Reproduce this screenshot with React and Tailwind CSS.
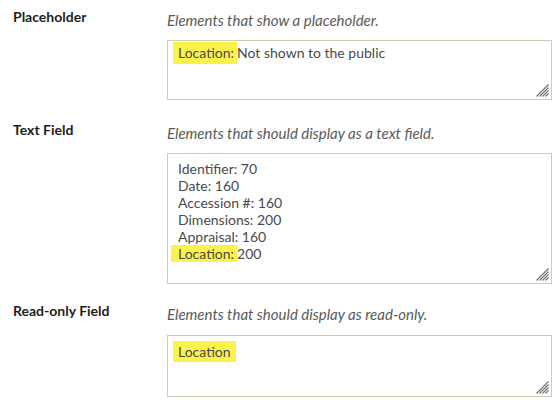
import React from 'react';

const font = { fontFamily: 'Lato, "Open Sans", sans-serif' };

function Grip() {
  return (
    <svg
      className="absolute right-[2px] bottom-[2px]"
      width="13"
      height="13"
      viewBox="0 0 13 13"
    >
      <g stroke="#6e6e6e" strokeWidth="1.1">
        <line x1="12.5" y1="0.5" x2="0.5" y2="12.5" />
        <line x1="12.5" y1="3.5" x2="3.5" y2="12.5" />
        <line x1="12.5" y1="6.5" x2="6.5" y2="12.5" />
        <line x1="12.5" y1="9.5" x2="9.5" y2="12.5" />
      </g>
    </svg>
  );
}

function Mark({ children, className = '' }) {
  return <span className={`bg-[#fbf34c] ${className}`}>{children}</span>;
}

function Section({ label, desc, pt, boxMt, boxH, boxPad, children }) {
  return (
    <div className={`flex ${pt}`}>
      <div className="w-[167px] pl-[13px] shrink-0">
        <div className="text-[14px] leading-[14px] font-bold text-[#1e1e1e]">
          {label}
        </div>
      </div>
      <div className="w-[385px]">
        <div className="text-[15px] leading-5 italic text-[#5a5a5a]">{desc}</div>
        <div
          className={`relative ${boxMt} ${boxH} ${boxPad} border border-[#cdcdb9] bg-white text-[14px] leading-[17px] text-[#4a4a4a]`}
        >
          {children}
          <Grip />
        </div>
      </div>
    </div>
  );
}

export default function App() {
  return (
    <div className="w-[559px] h-[404px] bg-white overflow-hidden" style={font}>
      <Section
        label="Placeholder"
        desc="Elements that show a placeholder."
        pt="pt-[10px]"
        boxMt="mt-[10px]"
        boxH="h-[60px]"
        boxPad="pl-[5px] pt-[1px]"
      >
        <div className="leading-[22px]">
          <Mark className="inline-block pl-[5px] pr-[3px]">Location:</Mark>
          Not shown to the public
        </div>
      </Section>

      <Section
        label="Text Field"
        desc="Elements that should display as a text field."
        pt="pt-[23px]"
        boxMt="mt-[10px]"
        boxH="h-[131px]"
        boxPad="pl-[10px] pt-[6px]"
      >
        <div>Identifier: 70</div>
        <div>Date: 160</div>
        <div>Accession #: 160</div>
        <div>Dimensions: 200</div>
        <div>Appraisal: 160</div>
        <div>
          <Mark className="inline-block -ml-[7px] pl-[7px] pr-[3px]">Location:</Mark>
          200
        </div>
      </Section>

      <Section
        label="Read-only Field"
        desc="Elements that should display as read-only."
        pt="pt-[20px]"
        boxMt="mt-[11px]"
        boxH="h-[62px]"
        boxPad="pl-[5px] pt-[5px]"
      >
        <div className="leading-[21px]">
          <Mark className="inline-block px-[5px]">Location</Mark>
        </div>
      </Section>
    </div>
  );
}
